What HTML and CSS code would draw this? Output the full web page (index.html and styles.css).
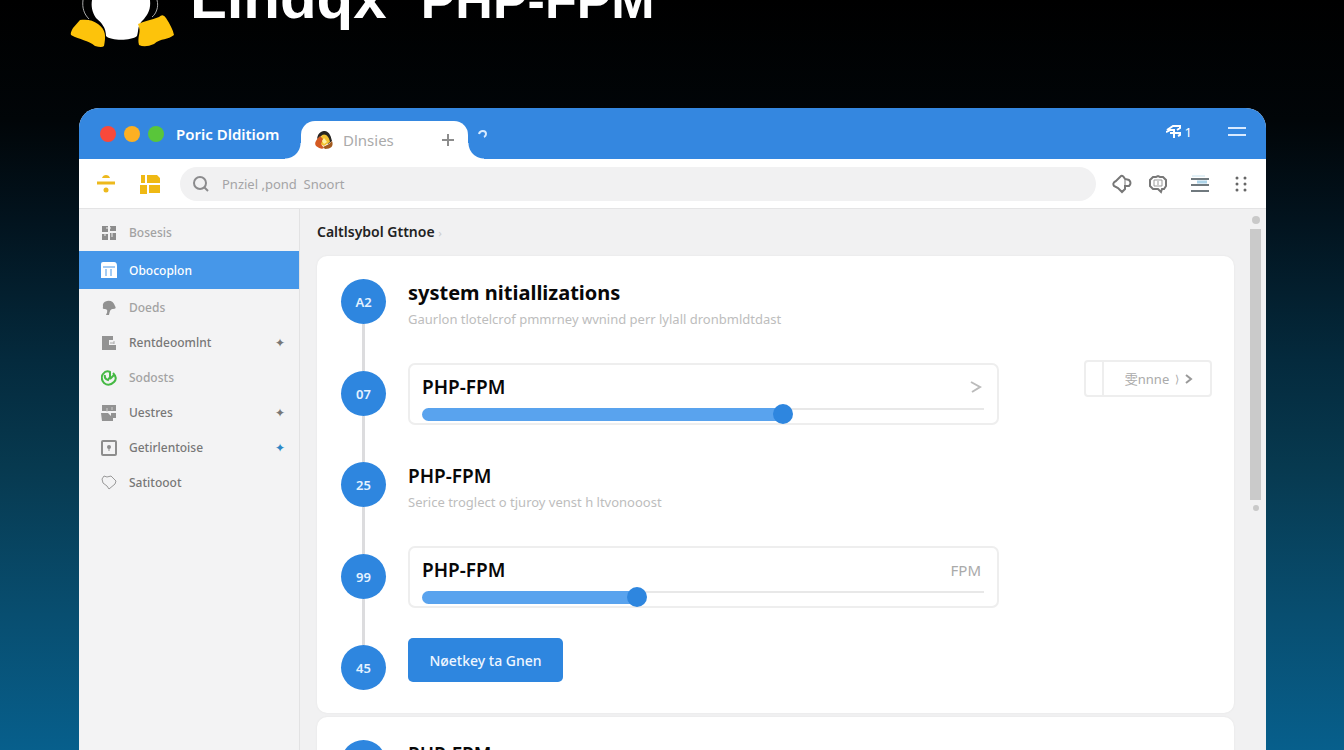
FILE: index.html
```html
<!DOCTYPE html>
<html lang="en">
<head>
<meta charset="utf-8">
<meta name="viewport" content="width=device-width, initial-scale=1">
<title>Lindqx PHP-FPM</title>
<link rel="stylesheet" href="styles.css">
</head>
<body>
<header class="hero">
  <svg class="hero-logo" width="106" height="48" viewBox="0 0 106 48" aria-hidden="true">
    <path d="M13 0C12 8 14 14 19 19M87 0C89 7 86 14 82 17" fill="none" stroke="#aaa" stroke-width="1"/>
    <path d="M22 0H80C81 9 78 14 74 19C67 25 69 30 67 36C61 41 41 41 36 36C36 28 32 23 26 18C22 12 21 6 22 0Z" fill="#fff"/>
    <path d="M10 20C17 19 23 20 28 24C36 30 36 36 34 46Q32 48 25 46C18 40 10 40 1 35Q0 33 3 28Z" fill="#fdc30b"/>
    <path d="M68 24C75 21 81 20 89 17Q93 13 96 18C100 24 103 30 104 35C98 40 91 38 84 44Q75 48 69 45C67 37 71 33 69 27Z" fill="#fdc30b"/>
  </svg>
  <h1 class="hero-title"><span>Lindqx</span> <span class="hero-sub">PHP-FPM</span></h1>
</header>

<main class="window">
  <div class="titlebar">
    <div class="lights"><i class="light red"></i><i class="light amber"></i><i class="light green"></i></div>
    <span class="window-name">Poric Dlditiom</span>
    <div class="tab">
      <svg width="20" height="20" viewBox="0 0 20 20" aria-hidden="true">
        <path d="M3 9C4 2 8 1 11 1C16 2 17 7 18 11L14 14L9 5Z" fill="#272522"/>
        <path d="M8 5C12 3 15 7 16 12L10 16L4 13Z" fill="#f2c230"/>
        <path d="M6 6C2 10 0 13 2 16Q7 20 10 18L7 14L9 9Z" fill="#d45a22"/>
        <path d="M8 11L10 8L13 12L10 14Z" fill="#fff1a0"/>
        <path d="M9 17L15 14L18 11C20 16 17 19 11 19Z" fill="#a35a1d"/>
      </svg>
      <span class="tab-name">Dlnsies</span>
      <button class="bare tab-add" aria-label="New tab"><svg width="14" height="14" viewBox="0 0 14 14"><path d="M7 1V13M1 7H13" stroke="#8c8c8c" stroke-width="2"/></svg></button>
    </div>
    <button class="bare" aria-label="Tab list"><svg width="10" height="10" viewBox="0 0 10 10"><path d="M1 5C2 1 8 1 8 5Q8 7 6 8" fill="none" stroke="#d8ebff" stroke-width="2"/></svg></button>
    <div class="title-actions">
      <span class="count"><svg width="16" height="14" viewBox="0 0 16 14" aria-hidden="true"><path d="M1 5L7 1H14V3L11 5M0 7L4 5H9M4 8H14V10L12 11M8 5V13" fill="none" stroke="#fff" stroke-width="2"/></svg>1</span>
      <button class="bare" aria-label="Menu"><svg width="18" height="12" viewBox="0 0 18 12"><path d="M0 2H18M0 9H18" stroke="#d9eaff" stroke-width="2"/></svg></button>
    </div>
  </div>

  <div class="toolbar">
    <button class="bare" aria-label="Split"><svg width="20" height="20" viewBox="0 0 20 20"><path d="M1 9H19" stroke="#edb91d" stroke-width="3"/><path d="M6 4Q7 1 10 1Q13 1 14 4Z" fill="#edb91d"/><circle cx="10" cy="16" r="2.5" fill="#edb91d"/></svg></button>
    <button class="bare" aria-label="Layout"><svg width="20" height="20" viewBox="0 0 20 20"><path d="M1 1H5V9H1ZM7 1H17L20 4V9H7ZM0 11H7V20H0ZM9 11H20V19H9Z" fill="#efb914"/></svg></button>
    <label class="search">
      <svg width="18" height="18" viewBox="0 0 18 18" aria-hidden="true"><circle cx="8" cy="8" r="6" fill="none" stroke="#8b8b8d" stroke-width="2"/><path d="M12 12L16 16" stroke="#8b8b8d" stroke-width="2"/></svg>
      <input type="text" aria-label="Search" placeholder="Pnziel ,pond  Snoort">
    </label>
    <div class="tools">
      <button class="bare" aria-label="Extensions"><svg width="20" height="20" viewBox="0 0 20 20"><path d="M6 5L9 2Q11 1 13 5L17 6Q20 9 17 12H13V15L10 18L6 14L2 12Q0 9 4 7Z" fill="none" stroke="#777" stroke-width="2"/><path d="M13 12V6" stroke="#777"/></svg></button>
      <button class="bare" aria-label="Downloads"><svg width="20" height="20" viewBox="0 0 20 20"><path d="M5 3H8L10 2L12 3H15L18 6V12L16 15H14L13 18L10 15H5L2 12V6Z" fill="none" stroke="#777" stroke-width="2"/><path d="M6 6H14V12H6ZM10 7V11" fill="none" stroke="#999"/></svg></button>
      <button class="bare wide" aria-label="Reading list"><svg width="20" height="20" viewBox="0 0 20 20"><path d="M2 2H15" stroke="#c8e3ef"/><path d="M1 5H19M1 11H19M1 17H19" stroke="#70797e" stroke-width="2"/><path d="M7 8H17" stroke="#add4e9" stroke-width="3"/></svg></button>
      <button class="bare" aria-label="Apps"><svg width="14" height="18" viewBox="0 0 14 18"><g fill="#666"><circle cx="3" cy="3" r="1.5"/><circle cx="11" cy="3" r="1.5"/><circle cx="3" cy="9" r="1.5"/><circle cx="11" cy="9" r="1.5"/><circle cx="3" cy="15" r="1.5"/><circle cx="11" cy="15" r="1.5"/></g></svg></button>
    </div>
  </div>

  <div class="workspace">
    <nav class="sidebar">
      <a class="nav faint" href="#"><svg width="16" height="16" viewBox="0 0 16 16"><path d="M1 1H7V7H1ZM9 1H15V6H9ZM1 9H7V15H1ZM9 8H15V15H9Z" fill="#8c8c8c"/><path d="M5 3H10M4 8V11M11 6V12" stroke="#eee"/></svg><span>Bosesis</span></a>
      <a class="nav active" href="#"><svg width="16" height="16" viewBox="0 0 16 16"><path d="M2 0H13Q16 0 16 4V16H0V2Q0 0 2 0Z" fill="#fff"/><path d="M2 5H14M5 7V14M10 7V14" stroke="#4998e9"/></svg><span>Obocoplon</span></a>
      <a class="nav faint" href="#"><svg width="16" height="16" viewBox="0 0 16 16"><path d="M2 7Q1 2 6 1Q12 0 14 6Q16 9 12 9Q9 8 8 15L5 15Q8 9 4 9Q1 9 2 7Z" fill="#919191"/></svg><span>Doeds</span></a>
      <a class="nav" href="#"><svg width="16" height="16" viewBox="0 0 16 16"><path d="M1 1H12V5H8V10H15V15H1Z" fill="#939393"/><path d="M9 8H13M13 6V9" stroke="#aaa"/></svg><span>Rentdeoomlnt</span><i class="mark">✦</i></a>
      <a class="nav faint" href="#"><svg width="16" height="16" viewBox="0 0 16 16"><path d="M12 3Q17 8 13 12Q8 17 3 13Q-1 8 2 4Q5 0 9 2V7L7 10Q3 9 4 5M9 9L14 4" fill="none" stroke="#45b944" stroke-width="2"/></svg><span>Sodosts</span></a>
      <a class="nav" href="#"><svg width="16" height="16" viewBox="0 0 16 16"><path d="M1 0H15V6H1ZM0 8H7L10 11V8H15V13H12V16H1Z" fill="#929292"/><path d="M6 3V7M11 2V5" stroke="#ccc"/></svg><span>Uestres</span><i class="mark">✦</i></a>
      <a class="nav" href="#"><svg width="16" height="16" viewBox="0 0 16 16"><rect x="1" y="1" width="14" height="14" rx="1" fill="none" stroke="#8d8d8d" stroke-width="2"/><circle cx="8" cy="7" r="2" fill="#8d8d8d"/><path d="M8 6V11" stroke="#8d8d8d"/></svg><span>Getirlentoise</span><i class="mark blue">✦</i></a>
      <a class="nav" href="#"><svg width="16" height="16" viewBox="0 0 16 16"><path d="M3 1L6 2L10 1L15 6L14 9L8 14L6 11L2 8L1 4Z" fill="none" stroke="#999" stroke-width="1"/></svg><span>Satitooot</span></a>
    </nav>

    <section class="content">
      <h2 class="page-title">Caltlsybol Gttnoe <small>›</small></h2>
      <div class="card">
        <ol class="steps">
          <li class="step"><span class="dot">A2</span><div class="text"><h3 class="big">system nitiallizations</h3><p>Gaurlon tlotelcrof pmmrney wvnind perr lylall dronbmldtdast</p></div></li>
          <li class="step alt"><span class="dot">07</span>
            <div class="panel"><div class="panel-head"><label for="fpm-a">PHP-FPM</label><svg width="12" height="14" viewBox="0 0 12 14" aria-hidden="true"><path d="M1 2L10 7L2 12" fill="none" stroke="#bbb" stroke-width="2"/></svg></div><input id="fpm-a" class="range" type="range" min="0" max="1000" value="647" style="--v:.647"></div>
            <button class="split"><span class="split-cell"></span><span class="split-main">雯nnne <small>⟩</small><svg width="8" height="10" viewBox="0 0 8 10" aria-hidden="true"><path d="M1 1L6 5L1 9" fill="none" stroke="#999" stroke-width="2"/></svg></span></button>
          </li>
          <li class="step"><span class="dot">25</span><div class="text"><h3>PHP-FPM</h3><p>Serice troglect o tjuroy venst h ltvonooost</p></div></li>
          <li class="step alt"><span class="dot">99</span>
            <div class="panel"><div class="panel-head"><label for="fpm-b">PHP-FPM</label><span class="unit">FPM</span></div><input id="fpm-b" class="range" type="range" min="0" max="1000" value="379" style="--v:.379"></div>
          </li>
          <li class="step last"><span class="dot">45</span><button class="primary">Nøetkey ta Gnen</button></li>
        </ol>
      </div>
      <div class="card">
        <ol class="steps"><li class="step last"><span class="dot"></span><div class="text"><h3>PHP-FPM</h3></div></li></ol>
      </div>
    </section>
    <div class="scroll" aria-hidden="true"><i class="cap"></i><i class="thumb"></i><i class="cap small"></i></div>
  </div>
</main>
</body>
</html>
```
FILE: styles.css
```css
* { box-sizing: border-box; }

body {
  margin: 0;
  height: 100vh;
  overflow: hidden;
  display: flex;
  flex-direction: column;
  font-family: "Noto Sans", "Noto Sans CJK SC", sans-serif;
  background: linear-gradient(#000 0%, #010508 16%, #02141f 30%, #042a3d 48%, #07394f 62%, #084e70 82%, #075f8c 100%);
}

h1, h2, h3, p, ol { margin: 0; padding: 0; }
i { font-style: normal; }
svg { flex: none; display: block; }

.bare {
  display: flex;
  padding: 0;
  border: 0;
  background: none;
}

.hero {
  flex: none;
  display: flex;
  align-items: flex-end;
  gap: 14px;
  height: 48px;
  padding-left: 70px;
  margin-bottom: 60px;
}

.hero-title {
  display: flex;
  align-items: baseline;
  gap: 34px;
  padding-bottom: 16px;
  color: #fff;
  font-family: "Liberation Sans", sans-serif;
  font-size: 60px;
  line-height: 64px;
  font-weight: 700;
}

.hero-sub { font-size: 52px; }

.window {
  flex: 1;
  min-height: 0;
  display: flex;
  flex-direction: column;
  margin: 0 78px 0 79px;
  border-radius: 20px 20px 0 0;
  overflow: hidden;
  background: #f1f1f2;
}

.titlebar {
  flex: none;
  display: flex;
  align-items: center;
  height: 51px;
  padding: 0 20px 0 21px;
  background: #3487e0;
}

.lights { display: flex; gap: 8px; }
.light { width: 16px; height: 16px; border-radius: 50%; }
.red { background: #f9493b; }
.amber { background: #fdb022; }
.green { background: #59c63a; }

.window-name {
  width: 137px;
  padding-left: 12px;
  color: #fff;
  font-size: 15px;
  font-weight: 600;
  white-space: nowrap;
}

.tab {
  position: relative;
  align-self: flex-end;
  display: flex;
  align-items: center;
  width: 167px;
  height: 38px;
  margin-right: 10px;
  padding: 0 13px;
  border-radius: 14px 14px 0 0;
  background: #fff;
}

.tab::before,
.tab::after {
  content: "";
  position: absolute;
  bottom: 0;
  width: 16px;
  height: 16px;
}

.tab::before { right: 100%; background: radial-gradient(circle at 0 0, transparent 15px, #fff 16px); }
.tab::after { left: 100%; background: radial-gradient(circle at 100% 0, transparent 15px, #fff 16px); }

.tab-name { margin-left: 9px; color: #aaa; font-size: 15px; }
.tab-add { margin-left: auto; }

.title-actions {
  display: flex;
  align-items: center;
  gap: 36px;
  margin-left: auto;
  padding-bottom: 3px;
}

.count {
  display: flex;
  align-items: center;
  gap: 3px;
  color: #fff;
  font-size: 13px;
}

.toolbar {
  flex: none;
  display: flex;
  align-items: center;
  height: 50px;
  padding: 0 18px 0 17px;
  gap: 24px;
  background: #fff;
  border-bottom: 1px solid #e4e4e5;
}

.search {
  flex: 1;
  display: flex;
  align-items: center;
  gap: 12px;
  height: 34px;
  margin-left: -4px;
  padding-left: 12px;
  border-radius: 17px;
  background: #f1f1f2;
}

.search input {
  flex: 1;
  min-width: 0;
  padding: 0;
  border: 0;
  outline: 0;
  background: none;
  font: 13px "Noto Sans", sans-serif;
}

.search input::placeholder { color: #a4a4a6; opacity: 1; white-space: pre; }

.tools {
  display: flex;
  align-items: center;
  gap: 16px;
  margin-left: -8px;
}

.wide { padding: 0 8px 0 6px; }

.workspace { flex: 1; min-height: 0; display: flex; }

.sidebar {
  flex: none;
  width: 221px;
  padding-top: 6px;
  border-right: 1px solid #e2e2e3;
  background: #f3f3f4;
}

.nav {
  display: flex;
  align-items: center;
  gap: 12px;
  height: 35px;
  padding: 0 14px 0 22px;
  color: #777;
  font-size: 12px;
  font-weight: 500;
  text-decoration: none;
}

.faint { color: #a2a2a2; }
.active { height: 38px; margin: 1px 0; background: #4697e9; color: #fff; }
.mark { margin-left: auto; color: #777; font-size: 12px; }
.blue { color: #2d87c6; }

.content { flex: 1; min-width: 0; padding: 0 16px 0 17px; }

.page-title {
  height: 47px;
  font-size: 14px;
  line-height: 46px;
  font-weight: 600;
  color: #222;
}

.page-title small { color: #ccc; font-weight: 400; }

.card {
  margin-bottom: 4px;
  padding: 23px 22px 23px 24px;
  border-radius: 10px;
  background: #fff;
  box-shadow: 0 0 2px #e2e2e2;
}

.steps { list-style: none; }

.step {
  position: relative;
  display: flex;
  align-items: flex-start;
  gap: 22px;
  height: 92px;
}

.step::before {
  content: "";
  position: absolute;
  left: 21px;
  top: 45px;
  bottom: 0;
  width: 3px;
  background: #dcdcde;
}

.alt { height: 91px; }
.last { height: 45px; }
.last::before { display: none; }

.dot {
  flex: none;
  display: grid;
  place-items: center;
  width: 45px;
  height: 45px;
  border-radius: 50%;
  background: #2e86df;
  color: #e4f2ff;
  font-size: 13px;
  font-weight: 600;
}

.text h3 {
  color: #080808;
  font-size: 19px;
  line-height: 28px;
  font-weight: 600;
}

.text .big { font-size: 20px; font-weight: 700; }

.text p {
  color: #bdbdbd;
  font-size: 13px;
  line-height: 24px;
  white-space: nowrap;
}

.panel {
  flex: 0 1 591px;
  height: 62px;
  margin-top: -8px;
  padding: 8px 13px 0 12px;
  border: 2px solid #eee;
  border-radius: 7px;
}

.panel-head {
  display: flex;
  align-items: center;
  justify-content: space-between;
  height: 28px;
  color: #080808;
  font-size: 19px;
  font-weight: 600;
}

.unit { padding-right: 3px; color: #aaa; font-size: 15px; font-weight: 400; }
.panel-head svg { margin-right: 2px; }

.range {
  appearance: none;
  display: block;
  width: 100%;
  height: 20px;
  margin: 3px 0 0;
  background: none;
}

.range::-webkit-slider-runnable-track {
  height: 13px;
  border-radius: 7px 0 0 7px;
  background:
    linear-gradient(#59a3ee, #59a3ee) 0 0 / calc(10px + (100% - 20px) * var(--v)) 100% no-repeat,
    linear-gradient(#e8e8e8, #e8e8e8) 0 0 / 100% 2px no-repeat;
}

.range::-webkit-slider-thumb {
  appearance: none;
  width: 20px;
  height: 20px;
  margin-top: -4px;
  border-radius: 50%;
  background: #2e86df;
}

.split {
  display: flex;
  width: 128px;
  height: 37px;
  margin: -11px 0 0 auto;
  padding: 0;
  border: 2px solid #eee;
  border-radius: 4px;
  background: #fff;
  color: #aaa;
  font: 13px "Noto Sans", "Noto Sans CJK SC", sans-serif;
}

.split-cell { width: 18px; height: 100%; border-right: 2px solid #eee; }

.split-main {
  flex: 1;
  display: flex;
  align-items: center;
  justify-content: center;
  gap: 6px;
  height: 100%;
  padding-left: 4px;
}

.primary {
  height: 44px;
  width: 155px;
  margin-top: -7px;
  padding: 0;
  border: 0;
  border-radius: 5px;
  background: #2e86df;
  color: #eef6ff;
  font: 500 14px "Noto Sans", sans-serif;
}

.scroll {
  flex: none;
  display: flex;
  flex-direction: column;
  align-items: center;
  gap: 5px;
  width: 16px;
  padding: 7px 5px 0 0;
}

.cap { width: 8px; height: 8px; border-radius: 50%; background: #c9c9c9; }
.small { width: 6px; height: 6px; }
.thumb { width: 11px; height: 271px; background: #cacaca; }
```
